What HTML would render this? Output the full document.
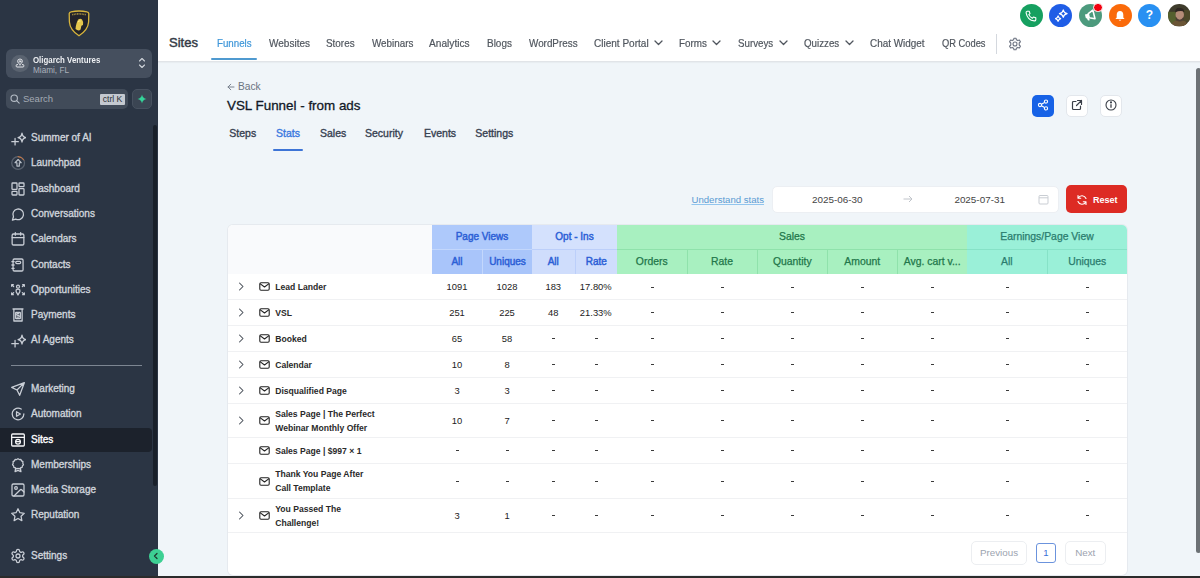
<!DOCTYPE html>
<html><head><meta charset="utf-8">
<style>
*{box-sizing:border-box;margin:0;padding:0}
html,body{width:1200px;height:578px;overflow:hidden;font-family:"Liberation Sans",sans-serif;background:#f0f5f9}
.abs{position:absolute}
#sb{position:absolute;left:0;top:0;width:158px;height:578px;background:#2b3544}
.nav{position:absolute;left:0;width:152px;height:24px;color:#cfd4db;font-size:10px;line-height:24px;white-space:nowrap;-webkit-text-stroke:0.35px #cfd4db}
.nav span{position:absolute;left:31px;top:0}
.nav svg{position:absolute;left:10px;top:4.3px;width:16px;height:16px;fill:none;stroke:#c9ced6;stroke-width:1.9;stroke-linecap:round;stroke-linejoin:round}
#hdr{position:absolute;left:158px;top:0;width:1042px;height:62px;background:#fff;border-bottom:1px solid #e1e4e8;box-shadow:0 1px 1px rgba(0,0,0,0.03)}
.tn{position:absolute;top:37px;font-size:10.75px;color:#50565e;white-space:nowrap;line-height:12px;-webkit-text-stroke:0.2px;transform-origin:0 0}
.chev{position:absolute;top:40px;width:9px;height:6px}
.circ{position:absolute;top:4px;width:23px;height:23px;border-radius:50%}
.ct{position:absolute;font-size:10.5px;color:#374151;white-space:nowrap;line-height:12px;-webkit-text-stroke:0.35px}
.ib{position:absolute;top:94px;width:22px;height:22px;border-radius:5px}
#tbl{position:absolute;left:228px;top:225px;width:899px;height:350px;background:#fff;border-radius:5px;box-shadow:0 0 0 1px #e6eaef;overflow:hidden}
.hc{position:absolute;font-size:10px;text-align:center;line-height:24px;white-space:nowrap;-webkit-text-stroke:0.45px}
.rw{position:absolute;left:0;width:900px;border-bottom:1px solid #eef0f3}
.cell{position:absolute;text-align:center;font-size:9.4px;color:#222;white-space:nowrap}
.nm{position:absolute;left:47px;font-size:8.6px;font-weight:700;color:#2a2a2a;line-height:14px;white-space:nowrap}
</style></head>
<body>
<!-- SIDEBAR -->
<div id="sb">
 <!-- logo -->
 <svg class="abs" style="left:67px;top:10px" width="24" height="27" viewBox="0 0 24 27">
  <path d="M2.2 3.6 Q2.4 2 4 1.8 Q12 0.2 20 1.8 Q21.6 2 21.8 3.6 L21.6 12 Q21 20 12 25.8 Q3 20 2.4 12 Z" fill="#22232a" stroke="#d8b53c" stroke-width="1.3"/>
  <path d="M5.2 4.8 Q12 3 18.8 4.8" stroke="#a89040" stroke-width="1.6" fill="none" stroke-dasharray="1 0.6"/>
  <path d="M8.5 19 Q9 12.5 11.5 9.2 Q13.5 8 15 9.5 Q16.6 11.5 16 15 L14.4 15.8 L13.6 19.5 Q11.5 21.5 8.5 19Z" fill="#e6c84c"/>
  <path d="M11 12 Q12 10.5 13.5 11" stroke="#fff2a0" stroke-width="0.8" fill="none"/>
 </svg>
 <!-- location -->
 <div class="abs" style="left:6px;top:49px;width:146px;height:29px;border-radius:6px;background:#454f5e"></div>
 <div class="abs" style="left:11.3px;top:54.5px;width:17.5px;height:17.5px;border-radius:50%;background:#5a6370"></div>
 <svg class="abs" style="left:15px;top:58px" width="10" height="10" viewBox="0 0 10 10" fill="none" stroke="#e5e7eb" stroke-width="1" stroke-linecap="round" stroke-linejoin="round">
  <path d="M5 6.6 Q2.6 4.8 2.6 3.4 A2.4 2.4 0 0 1 7.4 3.4 Q7.4 4.8 5 6.6Z"/><circle cx="5" cy="3.4" r=".8"/><path d="M2.6 6.6 H2 Q1.2 6.6 1.2 7.4 V8.2 Q1.2 9 2 9 H8 Q8.8 9 8.8 8.2 V7.4 Q8.8 6.6 8 6.6 H7.4"/>
 </svg>
 <div class="abs" style="left:33px;top:54.5px;font-size:8.7px;font-weight:700;color:#eef0f3;white-space:nowrap;line-height:10px;transform:scaleX(0.905);transform-origin:0 0">Oligarch Ventures</div>
 <div class="abs" style="left:33px;top:66px;font-size:8.2px;color:#aab1bb;white-space:nowrap;line-height:10px">Miami, FL</div>
 <svg class="abs" style="left:138px;top:57px" width="8" height="12" viewBox="0 0 8 12" fill="none" stroke="#cfd4da" stroke-width="1.1" stroke-linecap="round" stroke-linejoin="round">
  <path d="M1.5 4 L4 1.5 L6.5 4"/><path d="M1.5 8 L4 10.5 L6.5 8"/>
 </svg>
 <!-- search -->
 <div class="abs" style="left:6px;top:89px;width:122px;height:20px;border-radius:5px;background:#414b59"></div>
 <svg class="abs" style="left:10px;top:94px" width="10" height="10" viewBox="0 0 10 10" fill="none" stroke="#b5bcc6" stroke-width="1.1" stroke-linecap="round">
  <circle cx="4.2" cy="4.2" r="3.2"/><path d="M6.6 6.6 L9.2 9.2"/>
 </svg>
 <div class="abs" style="left:23px;top:93px;font-size:9.5px;color:#a3aab4;line-height:12px">Search</div>
 <div class="abs" style="left:100px;top:94px;width:25px;height:11px;background:#c4c9d0;border-radius:1px;font-size:8.6px;color:#2a2f36;line-height:11px;text-align:center">ctrl K</div>
 <div class="abs" style="left:132px;top:89px;width:20px;height:20px;border-radius:5px;background:#3b4553;border:1px solid #47515f"></div>
 <svg class="abs" style="left:137px;top:94px" width="10" height="10" viewBox="0 0 10 10">
  <path d="M5 0.5 Q5.6 4.4 9.5 5 Q5.6 5.6 5 9.5 Q4.4 5.6 0.5 5 Q4.4 4.4 5 0.5Z" fill="#34d399"/>
 </svg>
 <!-- scrollbar -->
 <div class="abs" style="left:153px;top:125px;width:4px;height:361px;background:#19202a;border-radius:2px"></div>

 <!-- nav -->
 <div class="nav" style="top:125.8px;"><svg viewBox="0 0 24 24"><path d="M18 4.6 Q18.7 10.4 24 11.3 Q18.7 12.2 18 18 Q17.3 12.2 12 11.3 Q17.3 10.4 18 4.6Z"/><path d="M7.6 12.6 V22.4 M2.7 17.5 H12.5"/></svg><span>Summer of AI</span></div>
 <div class="nav" style="top:151.2px;"><svg viewBox="0 0 24 24"><circle cx="12.2" cy="12" r="9.6" stroke="#59626f"/><path d="M12.2 2.4 A9.6 9.6 0 0 1 20.6 7.4" stroke="#e07b39" stroke-width="1.4"/><path d="M12.2 6.8 L7.6 11.6 H10.4 V16.6 H14 V11.6 H16.8 Z" stroke="#b9c0c9" stroke-width="1.8"/></svg><span>Launchpad</span></div>
 <div class="nav" style="top:176.7px;"><svg viewBox="0 0 24 24"><rect x="3" y="3" width="7.5" height="9.5" rx="1"/><rect x="13.5" y="3" width="7.5" height="5.5" rx="1"/><rect x="13.5" y="11.5" width="7.5" height="9.5" rx="1"/><rect x="3" y="15.5" width="7.5" height="5.5" rx="1"/></svg><span>Dashboard</span></div>
 <div class="nav" style="top:201.9px;"><svg viewBox="0 0 24 24"><path d="M8.6 19.6 A8 8 0 1 0 5.2 16.2 L3.6 21.2 Z"/></svg><span>Conversations</span></div>
 <div class="nav" style="top:227.2px;"><svg viewBox="0 0 24 24"><rect x="3.2" y="4.5" width="17.6" height="16.5" rx="2"/><path d="M8 2.3 V6.2 M16 2.3 V6.2 M3.2 9.8 H20.8"/></svg><span>Calendars</span></div>
 <div class="nav" style="top:252.6px;"><svg viewBox="0 0 24 24"><rect x="4.6" y="3" width="15" height="18" rx="2"/><path d="M2.8 7 H6.2 M2.8 12 H6.2 M2.8 17 H6.2"/><rect x="8.6" y="6.6" width="7.4" height="3.4" rx="1.7"/></svg><span>Contacts</span></div>
 <div class="nav" style="top:277.7px;"><svg viewBox="0 0 24 24"><path d="M2.5 4 L5.5 7 M2.5 4 H5 M2.5 4 V6.5 M21.5 4 L18.5 7 M21.5 4 H19 M21.5 4 V6.5 M2.5 19 L5.5 16 M2.5 19 H5 M2.5 19 V16.5 M21.5 19 L18.5 16 M21.5 19 H19 M21.5 19 V16.5"/><circle cx="12" cy="7" r="2.2"/><path d="M9.2 12 Q12 9.5 14.8 12 V14.5 L12 19.5 L9.2 14.5 Z"/></svg><span>Opportunities</span></div>
 <div class="nav" style="top:303.2px;"><svg viewBox="0 0 24 24"><path d="M4.5 3 H19.5 M5.8 3 V21 H18.2 V3"/><rect x="8.5" y="8" width="7" height="9.5" rx=".8"/><path d="M13.2 9.8 H11.2 Q10 9.8 10 11 Q10 12.4 11.4 12.4 H12.6 Q14 12.4 14 13.8 Q14 15.2 12.6 15.2 H10.6"/></svg><span>Payments</span></div>
 <div class="nav" style="top:328.2px;"><svg viewBox="0 0 24 24"><path d="M18 4.6 Q18.7 10.4 24 11.3 Q18.7 12.2 18 18 Q17.3 12.2 12 11.3 Q17.3 10.4 18 4.6Z"/><path d="M7.6 12.6 V22.4 M2.7 17.5 H12.5"/></svg><span>AI Agents</span></div>
 <div class="abs" style="left:11px;top:365px;width:131px;height:1px;background:#7d8692"></div>
 <div class="nav" style="top:377.2px;"><svg viewBox="0 0 24 24"><path d="M21.5 2.5 L2.5 9.5 L10.5 13.5 L14.5 21.5 Z M21.5 2.5 L10.5 13.5"/></svg><span>Marketing</span></div>
 <div class="nav" style="top:402.2px;"><svg viewBox="0 0 24 24"><path d="M20.8 12 A8.8 8.8 0 1 1 16.8 4.6"/><path d="M9.8 8.6 L15.6 12 L9.8 15.4 Z"/></svg><span>Automation</span></div>
 <div class="abs" style="left:0;top:428px;width:152px;height:24px;background:#1c222c;border-radius:0 4px 4px 0"></div>
 <div class="nav" style="top:427.8px;color:#fff;-webkit-text-stroke:0.35px #fff;"><svg viewBox="0 0 24 24" style="stroke:#f5f6f8"><rect x="2.5" y="3" width="19" height="18" rx="1.5"/><path d="M2.5 8 H21.5"/><circle cx="12" cy="14.5" r="3.6"/><path d="M8.4 14.5 H15.6"/></svg><span>Sites</span></div>
 <div class="nav" style="top:452.7px;"><svg viewBox="0 0 24 24"><path d="M12 2.6 L14 3.8 L16.4 3.7 L17.4 5.8 L19.4 7 L19.2 9.4 L20.2 11.6 L18.6 13.3 L18.2 15.6 L15.9 16.2 L14.2 17.8 L12 17.1 L9.8 17.8 L8.1 16.2 L5.8 15.6 L5.4 13.3 L3.8 11.6 L4.8 9.4 L4.6 7 L6.6 5.8 L7.6 3.7 L10 3.8 Z"/><path d="M8.4 17 L7.6 22 L12 20 L16.4 22 L15.6 17"/></svg><span>Memberships</span></div>
 <div class="nav" style="top:478.2px;"><svg viewBox="0 0 24 24"><rect x="3" y="3" width="18" height="18" rx="2"/><circle cx="9" cy="9" r="2"/><path d="M21 15 L17.9 11.9 Q16.5 10.5 15.1 11.9 L6 21"/></svg><span>Media Storage</span></div>
 <div class="nav" style="top:503.2px;"><svg viewBox="0 0 24 24"><path d="M12 2.6 L14.9 8.6 L21.4 9.4 L16.6 13.9 L17.8 20.4 L12 17.2 L6.2 20.4 L7.4 13.9 L2.6 9.4 L9.1 8.6 Z"/></svg><span>Reputation</span></div>
 <div class="nav" style="top:543.5px;"><svg viewBox="0 0 24 24"><circle cx="12" cy="12" r="3"/><path d="M12.22 2h-.44a2 2 0 0 0-2 2v.18a2 2 0 0 1-1 1.73l-.43.25a2 2 0 0 1-2 0l-.15-.08a2 2 0 0 0-2.73.73l-.22.38a2 2 0 0 0 .73 2.730l.15.1a2 2 0 0 1 1 1.72v.51a2 2 0 0 1-1 1.74l-.15.09a2 2 0 0 0-.73 2.73l.22.38a2 2 0 0 0 2.73.73l.15-.08a2 2 0 0 1 2 0l.43.25a2 2 0 0 1 1 1.73V20a2 2 0 0 0 2 2h.44a2 2 0 0 0 2-2v-.18a2 2 0 0 1 1-1.73l.43-.25a2 2 0 0 1 2 0l.15.08a2 2 0 0 0 2.73-.73l.22-.39a2 2 0 0 0-.73-2.73l-.15-.08a2 2 0 0 1-1-1.74v-.5a2 2 0 0 1 1-1.74l.15-.09a2 2 0 0 0 .73-2.73l-.22-.38a2 2 0 0 0-2.73-.73l-.15.08a2 2 0 0 1-2 0l-.43-.25a2 2 0 0 1-1-1.73V4a2 2 0 0 0-2-2z"/></svg><span>Settings</span></div>
 <!-- collapse -->
 <div class="abs" style="left:148.5px;top:548.5px;width:15px;height:15px;border-radius:50%;background:#3dd093;z-index:5"></div>
 <svg class="abs" style="left:152px;top:552px;z-index:6" width="8" height="8" viewBox="0 0 8 8" fill="none" stroke="#1f3b30" stroke-width="1.3" stroke-linecap="round" stroke-linejoin="round"><path d="M5 1.5 L2.5 4 L5 6.5"/></svg>
</div>
<!-- HEADER -->
<div id="hdr"></div>
<div class="abs" style="left:169px;top:35.8px;font-size:13px;color:#343b46;line-height:14px;-webkit-text-stroke:0.45px #343b46">Sites</div>
<div class="tn" style="left:217px;color:#3e96d8;transform:scaleX(0.906)">Funnels</div>
<div class="abs" style="left:211px;top:58px;width:46px;height:2px;background:#4f9ad0;border-radius:1px"></div>
<div class="tn" style="left:268.5px;transform:scaleX(0.932)">Websites</div>
<div class="tn" style="left:326px;transform:scaleX(0.92)">Stores</div>
<div class="tn" style="left:371.5px;transform:scaleX(0.916)">Webinars</div>
<div class="tn" style="left:429.3px;transform:scaleX(0.944)">Analytics</div>
<div class="tn" style="left:487.2px;transform:scaleX(0.926)">Blogs</div>
<div class="tn" style="left:528.5px;transform:scaleX(0.917)">WordPress</div>
<div class="tn" style="left:594px;transform:scaleX(0.933)">Client Portal</div>
<svg class="chev" style="left:654px" viewBox="0 0 9 6" fill="none" stroke="#50565e" stroke-width="1.3" stroke-linecap="round" stroke-linejoin="round"><path d="M1 1 L4.5 4.5 L8 1"/></svg>
<div class="tn" style="left:679px;transform:scaleX(0.915)">Forms</div>
<svg class="chev" style="left:712px" viewBox="0 0 9 6" fill="none" stroke="#50565e" stroke-width="1.3" stroke-linecap="round" stroke-linejoin="round"><path d="M1 1 L4.5 4.5 L8 1"/></svg>
<div class="tn" style="left:738.4px;transform:scaleX(0.907)">Surveys</div>
<svg class="chev" style="left:779px" viewBox="0 0 9 6" fill="none" stroke="#50565e" stroke-width="1.3" stroke-linecap="round" stroke-linejoin="round"><path d="M1 1 L4.5 4.5 L8 1"/></svg>
<div class="tn" style="left:804.4px;transform:scaleX(0.907)">Quizzes</div>
<svg class="chev" style="left:845px" viewBox="0 0 9 6" fill="none" stroke="#50565e" stroke-width="1.3" stroke-linecap="round" stroke-linejoin="round"><path d="M1 1 L4.5 4.5 L8 1"/></svg>
<div class="tn" style="left:870.4px;transform:scaleX(0.922)">Chat Widget</div>
<div class="tn" style="left:941.5px;transform:scaleX(0.867)">QR Codes</div>
<div class="abs" style="left:996px;top:34px;width:1px;height:20px;background:#d4d8de"></div>
<svg class="abs" style="left:1008px;top:37px" width="14" height="14" viewBox="0 0 14 14" fill="none" stroke="#6b7280" stroke-width="1.1" stroke-linejoin="round"><circle cx="7" cy="7" r="2"/><path d="M6 1.2 H8 L8.4 2.8 L9.8 3.6 L11.4 3 L12.4 4.8 L11.2 6 V8 L12.4 9.2 L11.4 11 L9.8 10.4 L8.4 11.2 L8 12.8 H6 L5.6 11.2 L4.2 10.4 L2.6 11 L1.6 9.2 L2.8 8 V6 L1.6 4.8 L2.6 3 L4.2 3.6 L5.6 2.8 Z"/></svg>
<!-- top right circles -->
<div class="circ" style="left:1019.5px;background:#16a060"></div>
<svg class="abs" style="left:1025px;top:9.5px" width="12" height="12" viewBox="0 0 12 12" fill="none" stroke="#fff" stroke-width="1.1" stroke-linejoin="round"><path d="M2.2 1.2 L4.2 1.2 L5 3.6 L3.8 4.6 Q4.8 6.9 7.4 8.2 L8.4 7 L10.8 7.8 L10.8 9.8 Q10.6 11 9.2 10.9 Q2.6 10.3 1.1 2.8 Q1 1.4 2.2 1.2Z"/></svg>
<div class="circ" style="left:1049px;background:#1f5de6"></div>
<svg class="abs" style="left:1053.5px;top:8.5px" width="14" height="14" viewBox="0 0 13 13" fill="none" stroke="#fff" stroke-width="1.05" stroke-linejoin="round"><path d="M8.6 0.8 Q9 3.6 12.2 4.3 Q9 5 8.6 7.8 Q8.2 5 5 4.3 Q8.2 3.6 8.6 0.8Z"/><path d="M3.8 6.4 Q4.1 8.3 6.2 8.9 Q4.1 9.5 3.8 11.6 Q3.5 9.5 1.4 8.9 Q3.5 8.3 3.8 6.4Z"/></svg>
<div class="circ" style="left:1078.5px;background:#4c9a7d"></div>
<svg class="abs" style="left:1084px;top:9.2px" width="12" height="12" viewBox="0 0 14 14"><g transform="rotate(-14 7 7)"><path d="M1.4 5 H5.4 V9.8 H2 Q1.4 9.8 1.4 9.2 Z" fill="#fff"/><path d="M2.4 9.8 L3.2 12.8 H5.3 L4.9 9.8Z" fill="#fff"/><path d="M5.4 5 L11.6 2.2 V12.6 L5.4 9.8 Z" fill="none" stroke="#fff" stroke-width="1.8" stroke-linejoin="round"/></g></svg>
<div class="abs" style="left:1093.2px;top:2.7px;width:9.6px;height:9.6px;border-radius:50%;background:#f2000f;border:1px solid #fff"></div>
<div class="circ" style="left:1108.5px;background:#fa6a0a"></div>
<svg class="abs" style="left:1114px;top:9.5px" width="12" height="12" viewBox="0 0 12 12" fill="#fff"><path d="M6 1 Q9.2 1 9.3 4.8 V7.6 L10.6 9 H1.4 L2.7 7.6 V4.8 Q2.8 1 6 1Z"/><path d="M4.6 9.8 Q6 11.6 7.4 9.8Z"/></svg>
<div class="circ" style="left:1138px;background:#2890f2"></div>
<div class="abs" style="left:1138px;top:4px;width:23px;height:23px;line-height:23px;text-align:center;color:#fff;font-size:12px;font-weight:700">?</div>
<svg class="abs" style="left:1167.5px;top:4.2px" width="22.5" height="22.5" viewBox="0 0 23 23"><defs><clipPath id="av"><circle cx="11.5" cy="11.5" r="11.5"/></clipPath><filter id="bl"><feGaussianBlur stdDeviation="0.7"/></filter></defs><g clip-path="url(#av)"><rect width="23" height="23" fill="#3f3c2c"/><g filter="url(#bl)"><rect x="0" y="8" width="8" height="14" fill="#55602f"/><rect x="16" y="6" width="7" height="12" fill="#4d4a2c"/><path d="M3 23 Q5 16 11.5 16.5 Q19 16 21 23Z" fill="#6b5434"/><ellipse cx="12" cy="11" rx="4.3" ry="5.6" fill="#b58c78"/><path d="M7.2 8.5 Q8 3.5 12 4 Q16.5 3.8 16.8 8.5 Q14 6 7.2 8.5Z" fill="#2e2620"/><path d="M8 13 Q12 19 16 13 L15.6 16.5 Q12 19.5 8.4 16.5Z" fill="#4e4036"/></g></g></svg>
<!-- CONTENT -->
<div id="content">
<svg class="abs" style="left:227px;top:82.5px" width="8" height="8" viewBox="0 0 8 8" fill="none" stroke="#7b8390" stroke-width="1" stroke-linecap="round" stroke-linejoin="round"><path d="M7 4 H1 M3.8 1.2 L1 4 L3.8 6.8"/></svg>
<div class="abs" style="left:238px;top:80.5px;font-size:10.2px;color:#6b7380;line-height:12px">Back</div>
<div class="abs" style="left:227px;top:97.5px;font-size:13.4px;color:#111827;line-height:16px;white-space:nowrap;-webkit-text-stroke:0.3px #111827">VSL Funnel - from ads</div>
<div class="ct" style="left:229.3px;top:127px">Steps</div>
<div class="ct" style="left:276px;top:127px;color:#3a78e0">Stats</div>
<div class="abs" style="left:273px;top:149px;width:29.5px;height:2px;background:#3d74d6;border-radius:1px"></div>
<div class="ct" style="left:320px;top:127px">Sales</div>
<div class="ct" style="left:365px;top:127px">Security</div>
<div class="ct" style="left:424px;top:127px">Events</div>
<div class="ct" style="left:475.3px;top:127px">Settings</div>
<!-- icon buttons -->
<div class="ib" style="top:94.5px;left:1032px;background:#1762e6"></div>
<svg class="abs" style="left:1037px;top:99px" width="12" height="12" viewBox="0 0 12 12" fill="none" stroke="#fff" stroke-width="1.1"><circle cx="9" cy="2.6" r="1.6"/><circle cx="3" cy="6" r="1.6"/><circle cx="9" cy="9.4" r="1.6"/><path d="M4.4 5.2 L7.6 3.4 M4.4 6.8 L7.6 8.6"/></svg>
<div class="ib" style="top:94.5px;left:1066px;background:#fff;border:1px solid #e3e7ec"></div>
<svg class="abs" style="left:1071px;top:99px" width="12" height="12" viewBox="0 0 12 12" fill="none" stroke="#3b4049" stroke-width="1.2" stroke-linecap="round" stroke-linejoin="round"><path d="M5 2.5 H2.5 Q1.5 2.5 1.5 3.5 V9.5 Q1.5 10.5 2.5 10.5 H8.5 Q9.5 10.5 9.5 9.5 V7"/><path d="M6.5 1.5 H10.5 V5.5 M10.5 1.5 L5.5 6.5"/></svg>
<div class="ib" style="top:94.5px;left:1100px;background:#fff;border:1px solid #e3e7ec"></div>
<svg class="abs" style="left:1105px;top:99px" width="12" height="12" viewBox="0 0 12 12" fill="none" stroke="#3b4049" stroke-width="1.1"><circle cx="6" cy="6" r="5"/><path d="M6 5.2 V8.8" stroke-width="1.3"/><circle cx="6" cy="3.4" r=".5" fill="#3b4049"/></svg>
<!-- date range -->
<div class="abs" style="left:691.5px;top:194px;font-size:9.6px;color:#5a9bd3;line-height:12px;text-decoration:underline;text-decoration-color:#92c5ee;text-underline-offset:0.6px;white-space:nowrap">Understand stats</div>
<div class="abs" style="left:772px;top:185.5px;width:287px;height:27.5px;background:#fff;border-radius:5px;border:1px solid #eceff3"></div>
<div class="abs" style="left:812px;top:193.8px;font-size:9.9px;color:#444;line-height:12px">2025-06-30</div>
<svg class="abs" style="left:903px;top:195px" width="10" height="8" viewBox="0 0 10 8" fill="none" stroke="#c0c4ca" stroke-width="1"><path d="M0.5 4 H9 M6 1 L9 4 L6 7"/></svg>
<div class="abs" style="left:954.4px;top:193.8px;font-size:9.9px;color:#444;line-height:12px">2025-07-31</div>
<svg class="abs" style="left:1038px;top:194px" width="11" height="11" viewBox="0 0 11 11" fill="none" stroke="#c9cdd3" stroke-width="1"><rect x="1" y="1.5" width="9" height="8.5" rx="1"/><path d="M1 3.8 H10"/></svg>
<div class="abs" style="left:1066px;top:185px;width:61px;height:28px;background:#dd2b24;border-radius:5px"></div>
<svg class="abs" style="left:1075.5px;top:193.8px" width="12" height="12" viewBox="0 0 12 12" fill="none" stroke="#fff" stroke-width="1.1" stroke-linecap="round" stroke-linejoin="round"><path d="M10 4.5 A4.3 4.3 0 0 0 2.2 4 M2 1.5 V4.2 H4.7"/><path d="M2 7.5 A4.3 4.3 0 0 0 9.8 8 M10 10.5 V7.8 H7.3"/></svg>
<div class="abs" style="left:1093px;top:194px;font-size:9px;font-weight:700;color:#fff;line-height:12px">Reset</div>
</div>
<!-- TABLE -->
<div id="tbl">
<div class="abs" style="left:0;top:0;width:204px;height:49px;background:#f9fafc"></div>
<div class="hc" style="left:204px;top:0;width:100px;height:24px;background:#aec9fb;color:#2c5fd6;line-height:24px;">Page Views</div>
<div class="abs" style="left:204px;top:23.5px;width:100px;height:1px;background:#c3d7fc"></div>
<div class="hc" style="left:204px;top:24.5px;width:50px;height:24.5px;background:#a9c5fa;color:#2c5fd6;line-height:24px;">All</div>
<div class="hc" style="left:254px;top:24.5px;width:50px;height:24.5px;background:#a9c5fa;color:#2c5fd6;line-height:24px;border-left:1px solid #c3d7fc;">Uniques</div>
<div class="hc" style="left:304px;top:0;width:85px;height:24px;background:#d4e1fd;color:#2c5fd6;line-height:24px;">Opt - Ins</div>
<div class="abs" style="left:304px;top:23.5px;width:85px;height:1px;background:#bccffa"></div>
<div class="hc" style="left:304px;top:24.5px;width:42.5px;height:24.5px;background:#cfddfc;color:#2c5fd6;line-height:24px;">All</div>
<div class="hc" style="left:346.5px;top:24.5px;width:42.5px;height:24.5px;background:#cfddfc;color:#2c5fd6;line-height:24px;border-left:1px solid #bccffa;">Rate</div>
<div class="hc" style="left:389px;top:0;width:350px;height:24px;background:#a8f0c0;color:#22764a;line-height:24px;font-size:10.4px;-webkit-text-stroke:0.25px;">Sales</div>
<div class="abs" style="left:389px;top:23.5px;width:350px;height:1px;background:#8fe2ab"></div>
<div class="hc" style="left:389px;top:24.5px;width:69.5px;height:24.5px;background:#a8f0c0;color:#22764a;line-height:24px;font-size:10.4px;-webkit-text-stroke:0.25px;">Orders</div>
<div class="hc" style="left:458.5px;top:24.5px;width:70.0px;height:24.5px;background:#a8f0c0;color:#22764a;line-height:24px;border-left:1px solid #8fe2ab;font-size:10.4px;-webkit-text-stroke:0.25px;">Rate</div>
<div class="hc" style="left:528.5px;top:24.5px;width:70.5px;height:24.5px;background:#a8f0c0;color:#22764a;line-height:24px;border-left:1px solid #8fe2ab;font-size:10.4px;-webkit-text-stroke:0.25px;">Quantity</div>
<div class="hc" style="left:599px;top:24.5px;width:69.5px;height:24.5px;background:#a8f0c0;color:#22764a;line-height:24px;border-left:1px solid #8fe2ab;font-size:10.4px;-webkit-text-stroke:0.25px;">Amount</div>
<div class="hc" style="left:668.5px;top:24.5px;width:70.5px;height:24.5px;background:#a8f0c0;color:#22764a;line-height:24px;border-left:1px solid #8fe2ab;font-size:10.4px;-webkit-text-stroke:0.25px;">Avg. cart v...</div>
<div class="hc" style="left:739px;top:0;width:160px;height:24px;background:#9af0d8;color:#2a7c6e;line-height:24px;font-size:10.4px;-webkit-text-stroke:0.25px;">Earnings/Page View</div>
<div class="abs" style="left:739px;top:23.5px;width:160px;height:1px;background:#86e2c7"></div>
<div class="hc" style="left:739px;top:24.5px;width:79.5px;height:24.5px;background:#9af0d8;color:#2a7c6e;line-height:24px;font-size:10.4px;-webkit-text-stroke:0.25px;">All</div>
<div class="hc" style="left:818.5px;top:24.5px;width:80.5px;height:24.5px;background:#9af0d8;color:#2a7c6e;line-height:24px;border-left:1px solid #86e2c7;font-size:10.4px;-webkit-text-stroke:0.25px;">Uniques</div>
<div class="abs" style="left:0;top:74.0px;width:900px;height:1px;background:#f0f1f3"></div>
<svg class="abs" style="left:10px;top:57.25px" width="6" height="9" viewBox="0 0 6 9" fill="none" stroke="#444b55" stroke-width="1.05" stroke-linecap="round" stroke-linejoin="round"><path d="M1.5 1 L5 4.5 L1.5 8"/></svg>
<svg class="abs" style="left:30.5px;top:57.25px" width="11" height="9" viewBox="0 0 11 9" fill="none" stroke="#222" stroke-width="1.1" stroke-linejoin="round"><rect x="0.8" y="0.8" width="9.4" height="7.4" rx="1.2"/><path d="M1 1.6 L5.5 5 L10 1.6"/></svg>
<div class="nm" style="left:47.2px;top:54.75px">Lead Lander</div>
<div class="cell" style="left:204px;top:54.75px;width:50px;line-height:14px">1091</div>
<div class="cell" style="left:254px;top:54.75px;width:50px;line-height:14px">1028</div>
<div class="cell" style="left:304px;top:54.75px;width:42.5px;line-height:14px">183</div>
<div class="cell" style="left:346.5px;top:54.75px;width:42.5px;line-height:14px">17.80%</div>
<div class="abs" style="left:422.85px;top:61.65px;width:3px;height:1.1px;background:#3a3a3a"></div>
<div class="abs" style="left:492.6px;top:61.65px;width:3px;height:1.1px;background:#3a3a3a"></div>
<div class="abs" style="left:562.85px;top:61.65px;width:3px;height:1.1px;background:#3a3a3a"></div>
<div class="abs" style="left:632.85px;top:61.65px;width:3px;height:1.1px;background:#3a3a3a"></div>
<div class="abs" style="left:702.85px;top:61.65px;width:3px;height:1.1px;background:#3a3a3a"></div>
<div class="abs" style="left:777.85px;top:61.65px;width:3px;height:1.1px;background:#3a3a3a"></div>
<div class="abs" style="left:857.85px;top:61.65px;width:3px;height:1.1px;background:#3a3a3a"></div>
<div class="abs" style="left:0;top:100.0px;width:900px;height:1px;background:#f0f1f3"></div>
<svg class="abs" style="left:10px;top:83.0px" width="6" height="9" viewBox="0 0 6 9" fill="none" stroke="#444b55" stroke-width="1.05" stroke-linecap="round" stroke-linejoin="round"><path d="M1.5 1 L5 4.5 L1.5 8"/></svg>
<svg class="abs" style="left:30.5px;top:83.0px" width="11" height="9" viewBox="0 0 11 9" fill="none" stroke="#222" stroke-width="1.1" stroke-linejoin="round"><rect x="0.8" y="0.8" width="9.4" height="7.4" rx="1.2"/><path d="M1 1.6 L5.5 5 L10 1.6"/></svg>
<div class="nm" style="left:47.2px;top:80.5px">VSL</div>
<div class="cell" style="left:204px;top:80.5px;width:50px;line-height:14px">251</div>
<div class="cell" style="left:254px;top:80.5px;width:50px;line-height:14px">225</div>
<div class="cell" style="left:304px;top:80.5px;width:42.5px;line-height:14px">48</div>
<div class="cell" style="left:346.5px;top:80.5px;width:42.5px;line-height:14px">21.33%</div>
<div class="abs" style="left:422.85px;top:87.4px;width:3px;height:1.1px;background:#3a3a3a"></div>
<div class="abs" style="left:492.6px;top:87.4px;width:3px;height:1.1px;background:#3a3a3a"></div>
<div class="abs" style="left:562.85px;top:87.4px;width:3px;height:1.1px;background:#3a3a3a"></div>
<div class="abs" style="left:632.85px;top:87.4px;width:3px;height:1.1px;background:#3a3a3a"></div>
<div class="abs" style="left:702.85px;top:87.4px;width:3px;height:1.1px;background:#3a3a3a"></div>
<div class="abs" style="left:777.85px;top:87.4px;width:3px;height:1.1px;background:#3a3a3a"></div>
<div class="abs" style="left:857.85px;top:87.4px;width:3px;height:1.1px;background:#3a3a3a"></div>
<div class="abs" style="left:0;top:126.0px;width:900px;height:1px;background:#f0f1f3"></div>
<svg class="abs" style="left:10px;top:109.0px" width="6" height="9" viewBox="0 0 6 9" fill="none" stroke="#444b55" stroke-width="1.05" stroke-linecap="round" stroke-linejoin="round"><path d="M1.5 1 L5 4.5 L1.5 8"/></svg>
<svg class="abs" style="left:30.5px;top:109.0px" width="11" height="9" viewBox="0 0 11 9" fill="none" stroke="#222" stroke-width="1.1" stroke-linejoin="round"><rect x="0.8" y="0.8" width="9.4" height="7.4" rx="1.2"/><path d="M1 1.6 L5.5 5 L10 1.6"/></svg>
<div class="nm" style="left:47.2px;top:106.5px">Booked</div>
<div class="cell" style="left:204px;top:106.5px;width:50px;line-height:14px">65</div>
<div class="cell" style="left:254px;top:106.5px;width:50px;line-height:14px">58</div>
<div class="abs" style="left:324.35px;top:113.4px;width:3px;height:1.1px;background:#3a3a3a"></div>
<div class="abs" style="left:366.85px;top:113.4px;width:3px;height:1.1px;background:#3a3a3a"></div>
<div class="abs" style="left:422.85px;top:113.4px;width:3px;height:1.1px;background:#3a3a3a"></div>
<div class="abs" style="left:492.6px;top:113.4px;width:3px;height:1.1px;background:#3a3a3a"></div>
<div class="abs" style="left:562.85px;top:113.4px;width:3px;height:1.1px;background:#3a3a3a"></div>
<div class="abs" style="left:632.85px;top:113.4px;width:3px;height:1.1px;background:#3a3a3a"></div>
<div class="abs" style="left:702.85px;top:113.4px;width:3px;height:1.1px;background:#3a3a3a"></div>
<div class="abs" style="left:777.85px;top:113.4px;width:3px;height:1.1px;background:#3a3a3a"></div>
<div class="abs" style="left:857.85px;top:113.4px;width:3px;height:1.1px;background:#3a3a3a"></div>
<div class="abs" style="left:0;top:152.0px;width:900px;height:1px;background:#f0f1f3"></div>
<svg class="abs" style="left:10px;top:135.0px" width="6" height="9" viewBox="0 0 6 9" fill="none" stroke="#444b55" stroke-width="1.05" stroke-linecap="round" stroke-linejoin="round"><path d="M1.5 1 L5 4.5 L1.5 8"/></svg>
<svg class="abs" style="left:30.5px;top:135.0px" width="11" height="9" viewBox="0 0 11 9" fill="none" stroke="#222" stroke-width="1.1" stroke-linejoin="round"><rect x="0.8" y="0.8" width="9.4" height="7.4" rx="1.2"/><path d="M1 1.6 L5.5 5 L10 1.6"/></svg>
<div class="nm" style="left:47.2px;top:132.5px">Calendar</div>
<div class="cell" style="left:204px;top:132.5px;width:50px;line-height:14px">10</div>
<div class="cell" style="left:254px;top:132.5px;width:50px;line-height:14px">8</div>
<div class="abs" style="left:324.35px;top:139.4px;width:3px;height:1.1px;background:#3a3a3a"></div>
<div class="abs" style="left:366.85px;top:139.4px;width:3px;height:1.1px;background:#3a3a3a"></div>
<div class="abs" style="left:422.85px;top:139.4px;width:3px;height:1.1px;background:#3a3a3a"></div>
<div class="abs" style="left:492.6px;top:139.4px;width:3px;height:1.1px;background:#3a3a3a"></div>
<div class="abs" style="left:562.85px;top:139.4px;width:3px;height:1.1px;background:#3a3a3a"></div>
<div class="abs" style="left:632.85px;top:139.4px;width:3px;height:1.1px;background:#3a3a3a"></div>
<div class="abs" style="left:702.85px;top:139.4px;width:3px;height:1.1px;background:#3a3a3a"></div>
<div class="abs" style="left:777.85px;top:139.4px;width:3px;height:1.1px;background:#3a3a3a"></div>
<div class="abs" style="left:857.85px;top:139.4px;width:3px;height:1.1px;background:#3a3a3a"></div>
<div class="abs" style="left:0;top:178.0px;width:900px;height:1px;background:#f0f1f3"></div>
<svg class="abs" style="left:10px;top:161.0px" width="6" height="9" viewBox="0 0 6 9" fill="none" stroke="#444b55" stroke-width="1.05" stroke-linecap="round" stroke-linejoin="round"><path d="M1.5 1 L5 4.5 L1.5 8"/></svg>
<svg class="abs" style="left:30.5px;top:161.0px" width="11" height="9" viewBox="0 0 11 9" fill="none" stroke="#222" stroke-width="1.1" stroke-linejoin="round"><rect x="0.8" y="0.8" width="9.4" height="7.4" rx="1.2"/><path d="M1 1.6 L5.5 5 L10 1.6"/></svg>
<div class="nm" style="left:47.2px;top:158.5px">Disqualified Page</div>
<div class="cell" style="left:204px;top:158.5px;width:50px;line-height:14px">3</div>
<div class="cell" style="left:254px;top:158.5px;width:50px;line-height:14px">3</div>
<div class="abs" style="left:324.35px;top:165.4px;width:3px;height:1.1px;background:#3a3a3a"></div>
<div class="abs" style="left:366.85px;top:165.4px;width:3px;height:1.1px;background:#3a3a3a"></div>
<div class="abs" style="left:422.85px;top:165.4px;width:3px;height:1.1px;background:#3a3a3a"></div>
<div class="abs" style="left:492.6px;top:165.4px;width:3px;height:1.1px;background:#3a3a3a"></div>
<div class="abs" style="left:562.85px;top:165.4px;width:3px;height:1.1px;background:#3a3a3a"></div>
<div class="abs" style="left:632.85px;top:165.4px;width:3px;height:1.1px;background:#3a3a3a"></div>
<div class="abs" style="left:702.85px;top:165.4px;width:3px;height:1.1px;background:#3a3a3a"></div>
<div class="abs" style="left:777.85px;top:165.4px;width:3px;height:1.1px;background:#3a3a3a"></div>
<div class="abs" style="left:857.85px;top:165.4px;width:3px;height:1.1px;background:#3a3a3a"></div>
<div class="abs" style="left:0;top:212.0px;width:900px;height:1px;background:#f0f1f3"></div>
<svg class="abs" style="left:10px;top:191.0px" width="6" height="9" viewBox="0 0 6 9" fill="none" stroke="#444b55" stroke-width="1.05" stroke-linecap="round" stroke-linejoin="round"><path d="M1.5 1 L5 4.5 L1.5 8"/></svg>
<svg class="abs" style="left:30.5px;top:191.0px" width="11" height="9" viewBox="0 0 11 9" fill="none" stroke="#222" stroke-width="1.1" stroke-linejoin="round"><rect x="0.8" y="0.8" width="9.4" height="7.4" rx="1.2"/><path d="M1 1.6 L5.5 5 L10 1.6"/></svg>
<div class="nm" style="left:47.2px;top:181.5px">Sales Page | The Perfect<br>Webinar Monthly Offer</div>
<div class="cell" style="left:204px;top:188.5px;width:50px;line-height:14px">10</div>
<div class="cell" style="left:254px;top:188.5px;width:50px;line-height:14px">7</div>
<div class="abs" style="left:324.35px;top:195.4px;width:3px;height:1.1px;background:#3a3a3a"></div>
<div class="abs" style="left:366.85px;top:195.4px;width:3px;height:1.1px;background:#3a3a3a"></div>
<div class="abs" style="left:422.85px;top:195.4px;width:3px;height:1.1px;background:#3a3a3a"></div>
<div class="abs" style="left:492.6px;top:195.4px;width:3px;height:1.1px;background:#3a3a3a"></div>
<div class="abs" style="left:562.85px;top:195.4px;width:3px;height:1.1px;background:#3a3a3a"></div>
<div class="abs" style="left:632.85px;top:195.4px;width:3px;height:1.1px;background:#3a3a3a"></div>
<div class="abs" style="left:702.85px;top:195.4px;width:3px;height:1.1px;background:#3a3a3a"></div>
<div class="abs" style="left:777.85px;top:195.4px;width:3px;height:1.1px;background:#3a3a3a"></div>
<div class="abs" style="left:857.85px;top:195.4px;width:3px;height:1.1px;background:#3a3a3a"></div>
<div class="abs" style="left:0;top:238.0px;width:900px;height:1px;background:#f0f1f3"></div>
<svg class="abs" style="left:30.5px;top:221.0px" width="11" height="9" viewBox="0 0 11 9" fill="none" stroke="#222" stroke-width="1.1" stroke-linejoin="round"><rect x="0.8" y="0.8" width="9.4" height="7.4" rx="1.2"/><path d="M1 1.6 L5.5 5 L10 1.6"/></svg>
<div class="nm" style="left:47.2px;top:218.5px">Sales Page | $997 × 1</div>
<div class="abs" style="left:228.1px;top:225.4px;width:3px;height:1.1px;background:#3a3a3a"></div>
<div class="abs" style="left:278.1px;top:225.4px;width:3px;height:1.1px;background:#3a3a3a"></div>
<div class="abs" style="left:324.35px;top:225.4px;width:3px;height:1.1px;background:#3a3a3a"></div>
<div class="abs" style="left:366.85px;top:225.4px;width:3px;height:1.1px;background:#3a3a3a"></div>
<div class="abs" style="left:422.85px;top:225.4px;width:3px;height:1.1px;background:#3a3a3a"></div>
<div class="abs" style="left:492.6px;top:225.4px;width:3px;height:1.1px;background:#3a3a3a"></div>
<div class="abs" style="left:562.85px;top:225.4px;width:3px;height:1.1px;background:#3a3a3a"></div>
<div class="abs" style="left:632.85px;top:225.4px;width:3px;height:1.1px;background:#3a3a3a"></div>
<div class="abs" style="left:702.85px;top:225.4px;width:3px;height:1.1px;background:#3a3a3a"></div>
<div class="abs" style="left:777.85px;top:225.4px;width:3px;height:1.1px;background:#3a3a3a"></div>
<div class="abs" style="left:857.85px;top:225.4px;width:3px;height:1.1px;background:#3a3a3a"></div>
<div class="abs" style="left:0;top:273.0px;width:900px;height:1px;background:#f0f1f3"></div>
<svg class="abs" style="left:30.5px;top:251.5px" width="11" height="9" viewBox="0 0 11 9" fill="none" stroke="#222" stroke-width="1.1" stroke-linejoin="round"><rect x="0.8" y="0.8" width="9.4" height="7.4" rx="1.2"/><path d="M1 1.6 L5.5 5 L10 1.6"/></svg>
<div class="nm" style="left:47.2px;top:242.0px">Thank You Page After<br>Call Template</div>
<div class="abs" style="left:228.1px;top:255.9px;width:3px;height:1.1px;background:#3a3a3a"></div>
<div class="abs" style="left:278.1px;top:255.9px;width:3px;height:1.1px;background:#3a3a3a"></div>
<div class="abs" style="left:324.35px;top:255.9px;width:3px;height:1.1px;background:#3a3a3a"></div>
<div class="abs" style="left:366.85px;top:255.9px;width:3px;height:1.1px;background:#3a3a3a"></div>
<div class="abs" style="left:422.85px;top:255.9px;width:3px;height:1.1px;background:#3a3a3a"></div>
<div class="abs" style="left:492.6px;top:255.9px;width:3px;height:1.1px;background:#3a3a3a"></div>
<div class="abs" style="left:562.85px;top:255.9px;width:3px;height:1.1px;background:#3a3a3a"></div>
<div class="abs" style="left:632.85px;top:255.9px;width:3px;height:1.1px;background:#3a3a3a"></div>
<div class="abs" style="left:702.85px;top:255.9px;width:3px;height:1.1px;background:#3a3a3a"></div>
<div class="abs" style="left:777.85px;top:255.9px;width:3px;height:1.1px;background:#3a3a3a"></div>
<div class="abs" style="left:857.85px;top:255.9px;width:3px;height:1.1px;background:#3a3a3a"></div>
<div class="abs" style="left:0;top:307.0px;width:900px;height:1px;background:#f0f1f3"></div>
<svg class="abs" style="left:10px;top:286.0px" width="6" height="9" viewBox="0 0 6 9" fill="none" stroke="#444b55" stroke-width="1.05" stroke-linecap="round" stroke-linejoin="round"><path d="M1.5 1 L5 4.5 L1.5 8"/></svg>
<svg class="abs" style="left:30.5px;top:286.0px" width="11" height="9" viewBox="0 0 11 9" fill="none" stroke="#222" stroke-width="1.1" stroke-linejoin="round"><rect x="0.8" y="0.8" width="9.4" height="7.4" rx="1.2"/><path d="M1 1.6 L5.5 5 L10 1.6"/></svg>
<div class="nm" style="left:47.2px;top:276.5px">You Passed The<br>Challenge!</div>
<div class="cell" style="left:204px;top:283.5px;width:50px;line-height:14px">3</div>
<div class="cell" style="left:254px;top:283.5px;width:50px;line-height:14px">1</div>
<div class="abs" style="left:324.35px;top:290.4px;width:3px;height:1.1px;background:#3a3a3a"></div>
<div class="abs" style="left:366.85px;top:290.4px;width:3px;height:1.1px;background:#3a3a3a"></div>
<div class="abs" style="left:422.85px;top:290.4px;width:3px;height:1.1px;background:#3a3a3a"></div>
<div class="abs" style="left:492.6px;top:290.4px;width:3px;height:1.1px;background:#3a3a3a"></div>
<div class="abs" style="left:562.85px;top:290.4px;width:3px;height:1.1px;background:#3a3a3a"></div>
<div class="abs" style="left:632.85px;top:290.4px;width:3px;height:1.1px;background:#3a3a3a"></div>
<div class="abs" style="left:702.85px;top:290.4px;width:3px;height:1.1px;background:#3a3a3a"></div>
<div class="abs" style="left:777.85px;top:290.4px;width:3px;height:1.1px;background:#3a3a3a"></div>
<div class="abs" style="left:857.85px;top:290.4px;width:3px;height:1.1px;background:#3a3a3a"></div>
<div class="abs" style="left:743px;top:316px;width:56px;height:24px;border:1px solid #eceef1;border-radius:5px;font-size:9.8px;color:#9ca3af;text-align:center;line-height:22px">Previous</div>
<div class="abs" style="left:808px;top:317.5px;width:20px;height:20px;border:1px solid #6b93dd;border-radius:3px;font-size:9.5px;color:#3a6fd8;text-align:center;line-height:18px">1</div>
<div class="abs" style="left:837px;top:316px;width:40.5px;height:24px;border:1px solid #eceef1;border-radius:5px;font-size:9.8px;color:#9ca3af;text-align:center;line-height:22px">Next</div>
</div>
<!-- page scrollbar -->
<div class="abs" style="left:1196px;top:68px;width:5px;height:485px;background:#6c7175;border-radius:2.5px"></div>
<div class="abs" style="left:0;top:576px;width:1200px;height:2px;background:#2b2b2b"></div>
</body></html>
